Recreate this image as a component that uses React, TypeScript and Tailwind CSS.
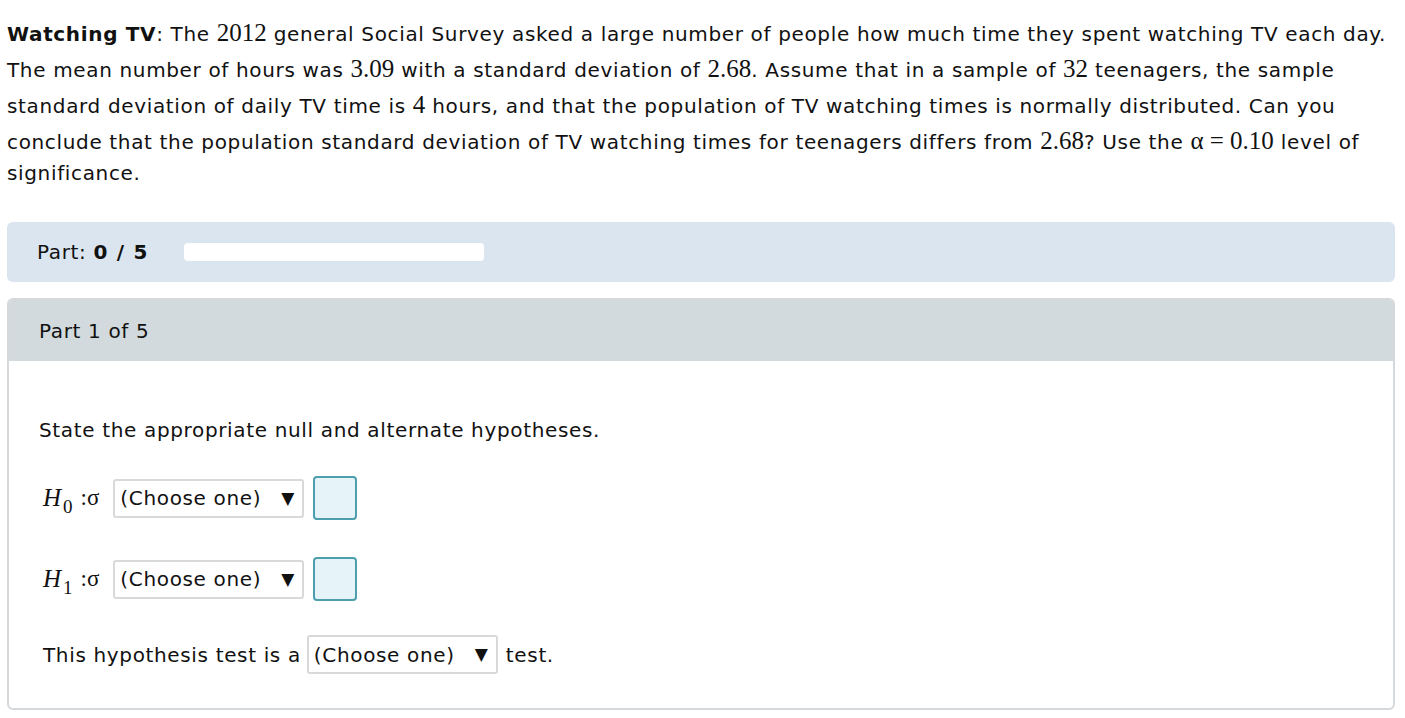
import React from 'react';

const Num = ({ children }: { children: React.ReactNode }) => (
  <span className="font-['Liberation_Serif',serif] text-[25px] tracking-normal leading-none">{children}</span>
);

const Choose = ({ className = '' }: { className?: string }) => (
  <div className={`flex items-center h-[39px] w-[191px] pl-[5px] pr-[8px] border-2 border-[#d9d9d9] rounded-[3px] bg-white justify-between ${className}`}>
    <span>(Choose one)</span>
    <span className="text-[17px] leading-none tracking-normal">▼</span>
  </div>
);

const AnswerBox = () => (
  <div className="w-[44px] h-[44px] rounded-[4px] border-2 border-[#4d9fae] bg-[#e6f3f8]" />
);

const Hyp = ({ sub }: { sub: string }) => (
  <div className="flex items-center">
    <span className="font-['Liberation_Serif',serif] italic text-[25px] tracking-normal flex items-baseline ml-[4px]">
      H<span className="not-italic text-[19px] relative top-[7px] ml-[2px]">{sub}</span>
    </span>
    <span className="font-['Liberation_Serif',serif] text-[23px] tracking-normal ml-[8px] mr-[14px]">:σ</span>
    <Choose />
    <div className="ml-[9px]">
      <AnswerBox />
    </div>
  </div>
);

export default function App() {
  return (
    <div className="bg-white min-h-screen font-['DejaVu_Sans',Verdana,sans-serif] text-[20px] tracking-[0.65px] text-[#111] pt-[16px]">
      <div className="pl-[7px] pr-[10px] leading-[36px] whitespace-nowrap">
        <div><b>Watching TV</b>: The <Num>2012</Num> general Social Survey asked a large number of people how much time they spent watching TV each day.</div>
        <div>The mean number of hours was <Num>3.09</Num> with a standard deviation of <Num>2.68</Num>. Assume that in a sample of <Num>32</Num> teenagers, the sample</div>
        <div>standard deviation of daily TV time is <Num>4</Num> hours, and that the population of TV watching times is normally distributed. Can you</div>
        <div>conclude that the population standard deviation of TV watching times for teenagers differs from <Num>2.68</Num>? Use the <Num>α = 0.10</Num> level of</div>
        <div className="leading-[26px]">significance.</div>
      </div>

      <div className="mx-[7px] mt-[36px] mr-[10px] h-[60px] rounded-[6px] bg-[#dae5ef] flex items-center pl-[30px]">
        <span className="w-[147px]">Part: <b className="tracking-[1.2px]">0 / 5</b></span>
        <div className="w-[300px] h-[18px] rounded-[4px] bg-white" />
      </div>

      <div className="mx-[7px] mr-[10px] mt-[16px] h-[412px] rounded-[6px] border-2 border-[#d6d9db] overflow-hidden">
        <div className="h-[61px] bg-[#d3dadd] flex items-center pl-[30px]">Part 1 of 5</div>
        <div className="pl-[30px] pt-[54px]">
          <div>State the appropriate null and alternate hypotheses.</div>
          <div className="mt-[31px]">
            <Hyp sub="0" />
          </div>
          <div className="mt-[37px]">
            <Hyp sub="1" />
          </div>
          <div className="mt-[34px] flex items-center pl-[4px]">
            <span>This hypothesis test is a</span>
            <Choose className="ml-[6px] mr-[8px]" />
            <span>test.</span>
          </div>
        </div>
      </div>
    </div>
  );
}
